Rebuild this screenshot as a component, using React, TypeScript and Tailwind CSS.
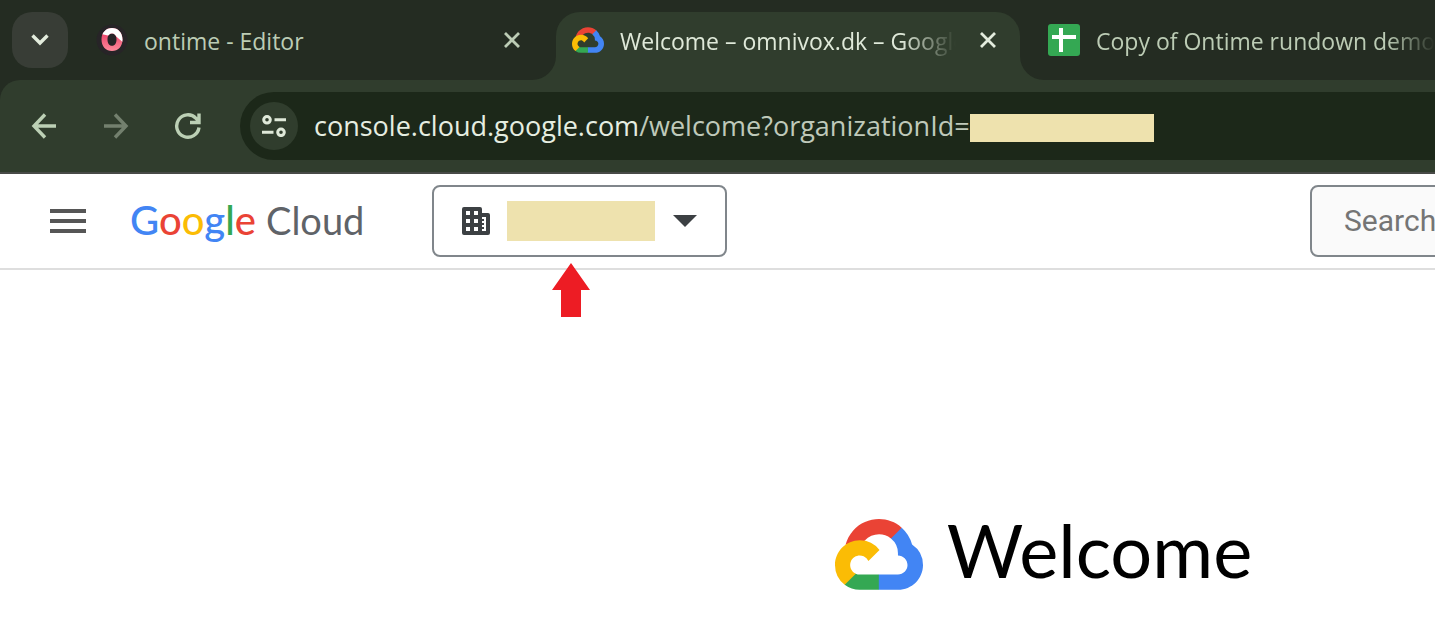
import type { ReactNode } from "react";

const uiFont = "font-['Segoe_UI','Open_Sans',sans-serif]";

function CloudLogo({ className }: { className: string }) {
  return (
    <svg viewBox="0 0 256 206" className={className} aria-hidden="true">
      <path fill="#EA4335" d="M170.252 56.819l22.253-22.253 1.483-9.37C153.437-11.677 88.976-7.496 52.42 33.92 42.267 45.423 34.734 59.764 30.717 74.573l7.97-1.123 44.505-7.34 3.436-3.513c19.797-21.742 53.27-24.667 76.128-6.168l7.496.39z" />
      <path fill="#4285F4" d="M224.205 73.918a100.249 100.249 0 0 0-30.217-48.722l-31.232 31.232a55.515 55.515 0 0 1 20.379 44.037v5.544c15.35 0 27.797 12.445 27.797 27.796 0 15.352-12.446 27.485-27.797 27.485h-55.671l-5.466 5.934v33.34l5.466 5.231h55.67c39.93.311 72.553-31.494 72.864-71.424a72.303 72.303 0 0 0-31.793-60.453" />
      <path fill="#34A853" d="M71.87 205.796h55.593V161.29H71.87a27.275 27.275 0 0 1-11.4-2.498l-7.887 2.42-22.409 22.253-1.952 7.574a72.003 72.003 0 0 0 43.649 14.756" />
      <path fill="#FBBC05" d="M71.87 61.425C31.94 61.664-.237 94.228.001 134.158a72.301 72.301 0 0 0 28.222 56.88l32.248-32.246c-13.99-6.322-20.208-22.786-13.887-36.776 6.32-13.99 22.786-20.208 36.775-13.888a27.796 27.796 0 0 1 13.887 13.888l32.248-32.248A72.224 72.224 0 0 0 71.87 61.425" />
    </svg>
  );
}

function OntimeIcon() {
  const ring = "M16 4C22 4 26.500 8.500 26.500 15.500S22 27 16 27 5.500 22.500 5.500 15.500 10 4 16 4ZM16 9.500C13 9.500 11.500 12 11.500 15.500S13 21.800 16 21.800 20.500 19 20.500 15.500 19 9.500 16 9.500Z";
  return (
    <svg viewBox="0 0 32 32" className="size-8 shrink-0" aria-hidden="true">
      <defs>
        <linearGradient id="ring" x1="0" y1="0" x2="0" y2="1">
          <stop offset="0.3" stopColor="#ee4b70" />
          <stop offset="1" stopColor="#ff8a9b" />
        </linearGradient>
        <clipPath id="ringTop">
          <path d="M4 2H30V19.500L26 17.500L18.500 11L12 11.500L5 10Z" />
        </clipPath>
      </defs>
      <circle cx="16" cy="16" r="15.500" fill="#272427" />
      <path d={ring} fill="url(#ring)" fillRule="evenodd" />
      <path d={ring} fill="#fff" fillRule="evenodd" clipPath="url(#ringTop)" />
    </svg>
  );
}

function SheetsIcon() {
  return (
    <svg viewBox="0 0 32 32" className="size-8 shrink-0" aria-hidden="true">
      <rect width="32" height="32" rx="3" fill="#34a853" />
      <path d="M4 11H11V4H15V11H28V15H15V28H11V15H4Z" fill="#fff" />
    </svg>
  );
}

function CloseButton({ className, label }: { className: string; label: string }) {
  return (
    <button type="button" aria-label={label} className={`flex size-8 shrink-0 items-center justify-center ${className}`}>
      <svg viewBox="0 0 16 16" className="size-4" fill="none" stroke="currentColor" strokeWidth="2.800" aria-hidden="true">
        <path d="M1 1 15 15M15 1 1 15" />
      </svg>
    </button>
  );
}

function NavButton({ label, className, children }: { label: string; className: string; children: ReactNode }) {
  return (
    <button type="button" aria-label={label} className={`flex size-14 shrink-0 items-center justify-center ${className}`}>
      <svg viewBox="0 0 28 28" className="size-7" fill="none" stroke="currentColor" strokeWidth="3.400" aria-hidden="true">
        {children}
      </svg>
    </button>
  );
}

function TabStrip() {
  return (
    <div className="flex h-20 items-end bg-[#242c22] pl-3">
      <button type="button" aria-label="Search tabs" className="mb-3 flex size-14 shrink-0 items-center justify-center rounded-[20px] bg-[#383d36] text-[#e3ecdd]">
        <svg viewBox="0 0 18 12" className="h-3 w-[18px]" fill="none" stroke="currentColor" strokeWidth="3.400" aria-hidden="true">
          <path d="M1.500 1.500 9 9 16.500 1.500" />
        </svg>
      </button>
      <div className="flex h-[68px] w-[488px] shrink-0 items-center gap-4 px-7 pb-3">
        <OntimeIcon />
        <span className="grow pt-0.5 whitespace-nowrap text-[#bcccb5]">ontime - Editor</span>
        <CloseButton label="Close ontime" className="text-[#bcccb5]" />
      </div>
      <div className="relative flex h-[68px] w-[464px] shrink-0 items-center rounded-t-3xl bg-[#303d2d] px-4 pb-3">
        <svg viewBox="0 0 24 24" className="absolute bottom-0 -left-6 size-6" aria-hidden="true">
          <path d="M24 0V24H0A24 24 0 0 0 24 0Z" fill="#303d2d" />
        </svg>
        <svg viewBox="0 0 24 24" className="absolute -right-6 bottom-0 size-6" aria-hidden="true">
          <path d="M0 0V24H24A24 24 0 0 1 0 0Z" fill="#303d2d" />
        </svg>
        <CloudLogo className="h-[26px] w-8 shrink-0" />
        <span className="ml-4 w-[336px] overflow-hidden pt-0.5 whitespace-nowrap text-[#dfe9d9] [mask-image:linear-gradient(to_right,black_84%,transparent)]">
          Welcome – omnivox.dk – Google Cloud
        </span>
        <CloseButton label="Close Welcome" className="ml-4 text-[#e3ecdd]" />
      </div>
      <div className="flex h-[68px] min-w-0 grow items-center gap-4 pb-3 pl-7">
        <SheetsIcon />
        <span className="min-w-0 grow overflow-hidden pt-0.5 whitespace-nowrap text-[#bcccb5] [mask-image:linear-gradient(to_right,black_86%,transparent)]">
          Copy of Ontime rundown demo
        </span>
      </div>
    </div>
  );
}

function Toolbar() {
  return (
    <div className="bg-[#242c22]">
      <div className="flex items-center gap-4 rounded-tl-[20px] border-b-2 border-[#484a47] bg-[#303d2d] py-3 pl-4">
        <NavButton label="Back" className="text-[#bcd0b5]">
          <path d="M26 14H4.500M15 2.500 4 14 15 25.500" />
        </NavButton>
        <NavButton label="Forward" className="text-[#73806e]">
          <path d="M2 14H23.500M13 2.500 24 14 13 25.500" />
        </NavButton>
        <NavButton label="Reload" className="text-[#bcd0b5]">
          <path d="M25 15.500A11.200 11.200 0 1 1 22 6.300L25 9.500M25 1.500V10.500H16" />
        </NavButton>
        <div className="ml-2 flex h-[68px] min-w-0 grow items-center rounded-l-full bg-[#1c2819] pl-[10px]">
          <button type="button" aria-label="View site information" className="flex size-12 shrink-0 items-center justify-center rounded-full bg-[#303d2d] text-[#dfe9d9]">
            <svg viewBox="0 0 24 22" className="h-[22px] w-6" fill="none" stroke="currentColor" strokeWidth="3" aria-hidden="true">
              <circle cx="5" cy="4.800" r="3.300" />
              <path d="M12.500 4.800H24M0 17.300H11.500" />
              <circle cx="19" cy="17.300" r="3.300" />
            </svg>
          </button>
          <p className="ml-4 whitespace-nowrap text-[27px] leading-8 text-[#bfc9ba]">
            <span className="text-[#e6eee1]">console.cloud.google.com</span>/welcome?organizationId=
          </p>
          <span className="mt-1 h-7 w-46 shrink-0 bg-[#eee2ae]" />
        </div>
      </div>
    </div>
  );
}

function ConsoleHeader() {
  return (
    <header className="flex h-24 items-center border-b-2 border-[#dedede] bg-white font-[Roboto,sans-serif]">
      <button type="button" aria-label="Main menu" className="ml-[50px] flex h-6 w-9 shrink-0 flex-col justify-between">
        <span className="h-1 w-full bg-[#565656]" />
        <span className="h-1 w-full bg-[#565656]" />
        <span className="h-1 w-full bg-[#565656]" />
      </button>
      <a href="#home" aria-label="Google Cloud" className="ml-11 flex w-[234px] shrink-0 items-baseline gap-2.5 pb-0.5 whitespace-nowrap font-[Lato,sans-serif] text-[40px] leading-[48px]">
        <span className="font-medium">
          <span className="text-[#4285f4]">G</span>
          <span className="text-[#ea4335]">o</span>
          <span className="text-[#fbbc05]">o</span>
          <span className="text-[#4285f4]">g</span>
          <span className="text-[#34a853]">l</span>
          <span className="text-[#ea4335]">e</span>
        </span>
        <span className="text-[38px] text-[#5f6368]">Cloud</span>
      </a>
      <div className="relative ml-[68px] shrink-0">
        <button type="button" aria-label="Select a project" className="flex h-[72px] items-center rounded-lg border-2 border-[#80868b] px-7 text-[#3c4043]">
          <svg viewBox="0 0 28 28" className="size-7" aria-hidden="true">
            <path fillRule="evenodd" fill="currentColor" d="M2 0H18Q20 0 20 2V6H26Q28 6 28 8V26Q28 28 26 28H2Q0 28 0 26V2Q0 0 2 0ZM4 4V8H8V4ZM12 4V8H16V4ZM4 12V16H8V12ZM12 12V16H16V12ZM4 20V24H8V20ZM12 20V24H16V20ZM20 10V12H22V14H20V16H22V18H20V20H22V22H20V24H24V10Z" />
          </svg>
          <span className="ml-[17px] h-10 w-37 bg-[#eee2ae]" />
          <svg viewBox="0 0 24 12" className="ml-[18px] h-3 w-6" aria-hidden="true">
            <path d="M0 0H24L12 12Z" fill="currentColor" />
          </svg>
        </button>
        <svg viewBox="0 0 38 54" className="absolute top-[78px] left-[120px] h-[54px] w-[38px]" aria-hidden="true">
          <path d="M19 0 38 27H29V54H9V27H0Z" fill="#ed1c24" />
        </svg>
      </div>
      <input
        type="text"
        aria-label="Search"
        placeholder="Search"
        className="mr-[-32px] ml-auto h-[72px] w-[157px] shrink-0 rounded-lg border-2 border-[#80868b] bg-[#fafafa] pb-0.5 pl-8 text-[30px] text-[#757575] placeholder:text-[#757575]"
      />
    </header>
  );
}

export default function App() {
  return (
    <div className={`min-h-screen overflow-x-hidden bg-white text-[23px] leading-8 ${uiFont}`}>
      <TabStrip />
      <Toolbar />
      <ConsoleHeader />
      <main className="flex items-center justify-center gap-6 pt-[238px] pl-[652px]">
        <CloudLogo className="h-[71px] w-[88px] shrink-0" />
        <h1 className="pb-2 font-[Lato,sans-serif] text-[74px] leading-[84px] text-black">Welcome</h1>
      </main>
    </div>
  );
}
